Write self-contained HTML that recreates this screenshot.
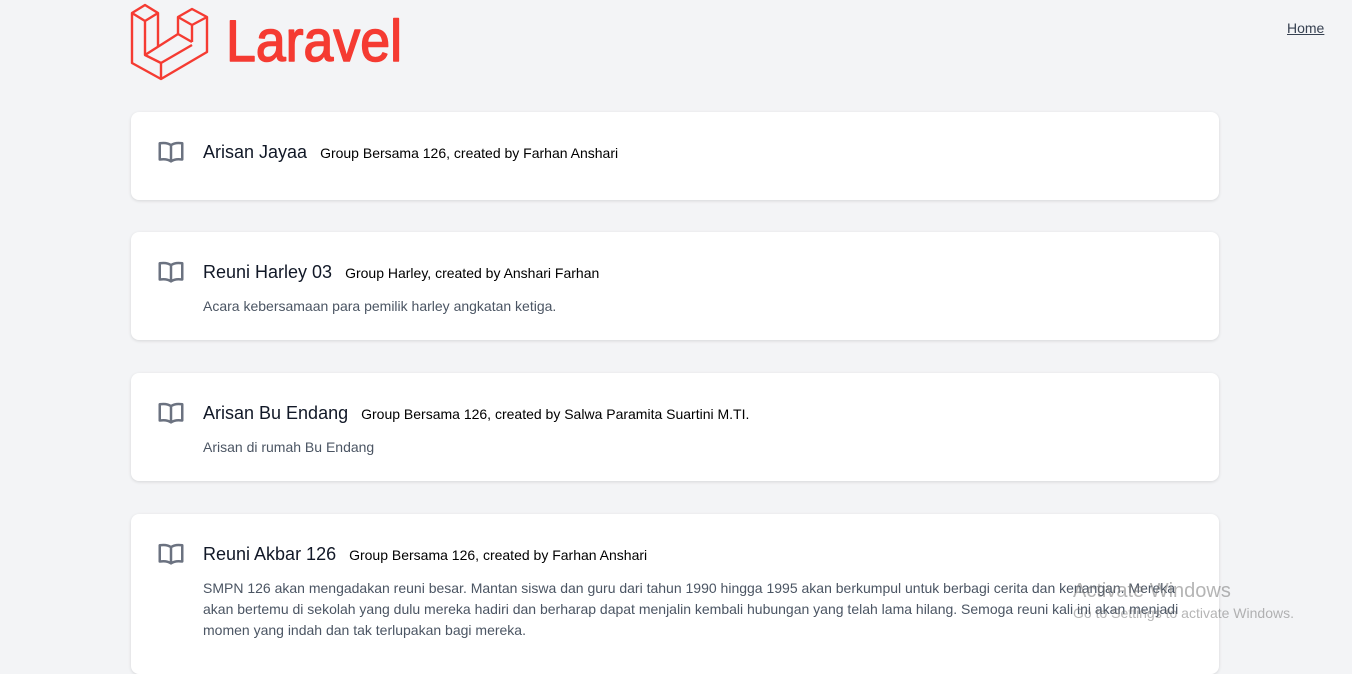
<!DOCTYPE html>
<html><head><meta charset="utf-8"><style>
body{margin:0;background:#f3f4f6;font-family:"Liberation Sans",sans-serif;width:1352px;height:654px;overflow:hidden;position:relative}
.home{position:absolute;left:1287px;top:20px;font-size:14px;color:#374151;text-decoration:underline}
.card{position:absolute;left:131px;width:1088px;background:#fff;border-radius:8px;box-shadow:0 1px 3px rgba(0,0,0,.12)}
.icon{position:absolute;left:25px;width:30px;height:30px}
.t{position:absolute;left:72px;white-space:nowrap;font-size:18px;color:#111827}
.t b{font-weight:normal;font-size:14px;color:#000;margin-left:13px}
.d{position:absolute;left:72px;width:990px;font-size:14px;line-height:21px;color:#4b5563}
.wm{position:absolute;left:1073px;color:rgba(120,120,120,.55)}
</style></head><body>
<svg style="position:absolute;left:0;top:0" width="420" height="90" fill="none" stroke="#f53b32" stroke-width="2.4" stroke-linejoin="round">
<path d="M132 13 L145 5 L158 13 L145 21 Z M132 13 V63 L161 79 L207 52 V17 M145 21 V55 L161 63 L192 45 M158 13 V47 M161 63 V79 M178 17 L192 9 L207 17 L192 25 Z M178 17 V34 L192 42 M192 25 V42 M178 34 L145 55"/>
<text x="226" y="61" fill="#f53b32" stroke="#f53b32" stroke-width="1.5" font-family="Liberation Sans,sans-serif" font-size="58" textLength="176" lengthAdjust="spacingAndGlyphs">Laravel</text>
</svg>
<a class="home">Home</a>
<div class="card" style="top:112px;height:88px">
<svg class="icon" style="top:25px" viewBox="0 0 24 24" fill="none" stroke="#6b7280" stroke-width="2" stroke-linejoin="round"><path d="M12 6.5C10 5 6.5 4.5 3 5v13c3.5-.5 7 0 9 1.5 2-1.5 5.5-2 9-1.5V5c-3.5-.5-7 0-9 1.5zM12 6.5v13"/></svg>
<div class="t" style="top:30px">Arisan Jayaa<b>Group Bersama 126, created by Farhan Anshari</b></div>
</div>
<div class="card" style="top:232px;height:108px">
<svg class="icon" style="top:25px" viewBox="0 0 24 24" fill="none" stroke="#6b7280" stroke-width="2" stroke-linejoin="round"><path d="M12 6.5C10 5 6.5 4.5 3 5v13c3.5-.5 7 0 9 1.5 2-1.5 5.5-2 9-1.5V5c-3.5-.5-7 0-9 1.5zM12 6.5v13"/></svg>
<div class="t" style="top:30px">Reuni Harley 03<b>Group Harley, created by Anshari Farhan</b></div>
<div class="d" style="top:64px">Acara kebersamaan para pemilik harley angkatan ketiga.</div>
</div>
<div class="card" style="top:373px;height:108px">
<svg class="icon" style="top:25px" viewBox="0 0 24 24" fill="none" stroke="#6b7280" stroke-width="2" stroke-linejoin="round"><path d="M12 6.5C10 5 6.5 4.5 3 5v13c3.5-.5 7 0 9 1.5 2-1.5 5.5-2 9-1.5V5c-3.5-.5-7 0-9 1.5zM12 6.5v13"/></svg>
<div class="t" style="top:30px">Arisan Bu Endang<b>Group Bersama 126, created by Salwa Paramita Suartini M.TI.</b></div>
<div class="d" style="top:64px">Arisan di rumah Bu Endang</div>
</div>
<div class="card" style="top:514px;height:160px">
<svg class="icon" style="top:25px" viewBox="0 0 24 24" fill="none" stroke="#6b7280" stroke-width="2" stroke-linejoin="round"><path d="M12 6.5C10 5 6.5 4.5 3 5v13c3.5-.5 7 0 9 1.5 2-1.5 5.5-2 9-1.5V5c-3.5-.5-7 0-9 1.5zM12 6.5v13"/></svg>
<div class="t" style="top:30px">Reuni Akbar 126<b>Group Bersama 126, created by Farhan Anshari</b></div>
<div class="d" style="top:64px">SMPN 126 akan mengadakan reuni besar. Mantan siswa dan guru dari tahun 1990 hingga 1995 akan berkumpul untuk berbagi cerita dan kenangan. Mereka akan bertemu di sekolah yang dulu mereka hadiri dan berharap dapat menjalin kembali hubungan yang telah lama hilang. Semoga reuni kali ini akan menjadi momen yang indah dan tak terlupakan bagi mereka.</div>
</div>
<div class="wm" style="top:580px;font-size:20px">Activate Windows</div>
<div class="wm" style="top:605px;font-size:14px">Go to Settings to activate Windows.</div>
</body></html>
